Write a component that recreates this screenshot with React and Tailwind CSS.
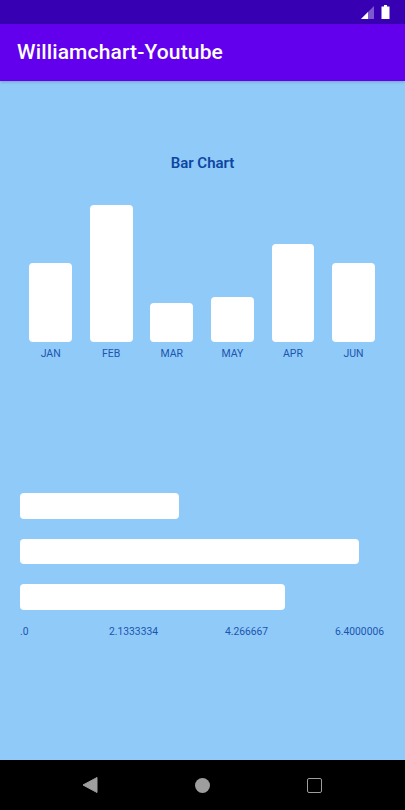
const font = { fontFamily: 'Roboto, sans-serif' };
const months = [
  ['JAN', 79], ['FEB', 137], ['MAR', 39], ['MAY', 45], ['APR', 98], ['JUN', 79],
];
const hbars = [159, 339, 265];
const ticks = ['2.1333334', '4.266667', '6.4000006'];

export default function App() {
  return (
    <div className="flex h-[810px] w-[405px] flex-col overflow-hidden bg-[#90caf9] font-['Roboto',sans-serif]" style={font}>
      <div className="flex h-6 shrink-0 items-center justify-end gap-[7px] bg-[#3700b3] pr-[15px]">
        <svg width="14" height="14" viewBox="0 0 14 14">
          <path d="M14 1 L14 14 L1 14 Z" fill="#ffffff" fillOpacity="0.35" />
          <path d="M8 7 L8 14 L1 14 Z" fill="#ffffff" />
        </svg>
        <svg width="9" height="14" viewBox="0 0 9 14">
          <path d="M3 0 H6 V1.5 H8.5 V14 H0.5 V1.5 H3 Z" fill="#ffffff" />
        </svg>
      </div>
      <div className="flex h-[57px] shrink-0 items-center bg-[#6200ee] pl-[17px] shadow-[0_1px_3px_rgba(0,0,0,0.2)]">
        <span className="text-[21px] font-medium leading-none tracking-[0.15px] text-white">Williamchart-Youtube</span>
      </div>

      <div className="flex flex-1 flex-col">
        <div className="pt-[72px] text-center text-[15px] font-semibold leading-5 text-[#0d47a1]">Bar Chart</div>
        <div className="mt-8 flex h-[137px] items-end gap-[17.9px] pl-[29.3px]">
          {months.map(([m, h]) => (
            <div key={m} className="w-[42.7px] rounded-[4px] bg-white" style={{ height: h }} />
          ))}
        </div>
        <div className="mt-[5px] flex gap-[17.9px] pl-[29.3px]">
          {months.map(([m]) => (
            <div key={m} className="flex w-[42.7px] justify-center whitespace-nowrap text-[10.5px] leading-[13px] text-[#1c55ae]">{m}</div>
          ))}
        </div>

        <div className="mt-[133px] flex flex-col gap-5 pl-5">
          {hbars.map((w) => (
            <div key={w} className="h-[25.7px] rounded-[4px] bg-white" style={{ width: w }} />
          ))}
        </div>
        <div className="mt-[14.5px] flex pl-5 text-[10.3px] leading-[13px] text-[#1c55ae]">
          <span className="w-[57px] shrink-0">.0</span>
          {ticks.map((t) => <span key={t} className="w-[113px] shrink-0 text-center">{t}</span>)}
        </div>
      </div>

      <div className="flex h-[50px] shrink-0 items-center justify-between bg-black pl-[82px] pr-[83px]">
        <svg width="16" height="18" viewBox="0 0 16 18"><path d="M15 1.5 V16.5 L1 9 Z" fill="#9e9e9e" stroke="#9e9e9e" strokeLinejoin="round" /></svg>
        <span className="h-[15px] w-[15px] rounded-full bg-[#9e9e9e]" />
        <span className="h-[15px] w-[15px] rounded-[2px] border-[1.5px] border-[#9e9e9e]" />
      </div>
    </div>
  );
}
